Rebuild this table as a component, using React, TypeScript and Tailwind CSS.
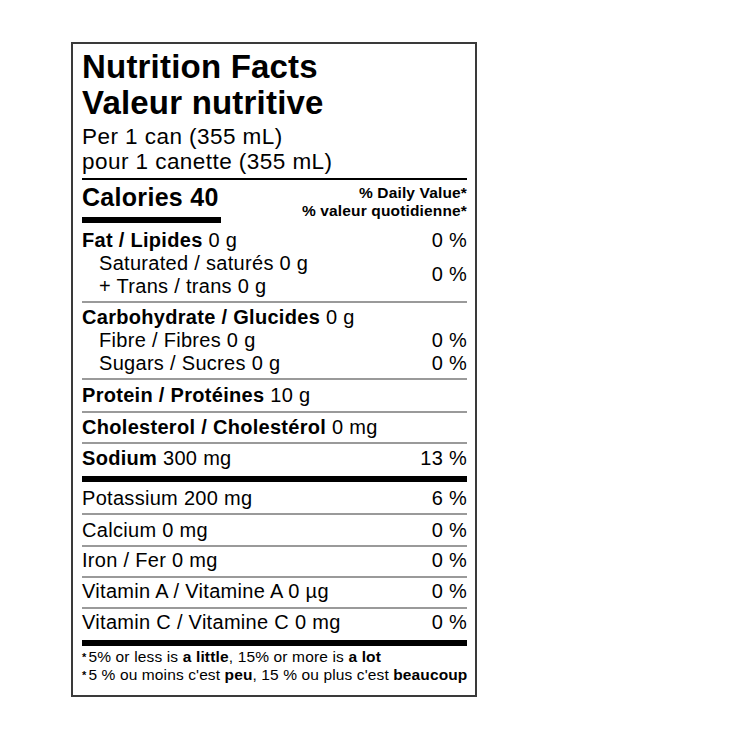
import React from "react";

const F = "font-['Liberation_Sans',Arial,Helvetica,sans-serif]";

function Line({ label, rest, dv, indent }: { label?: string; rest?: string; dv?: string; indent?: boolean }) {
  return (
    <div className={`flex justify-between leading-[23px] ${indent ? "pl-[17px]" : ""}`}>
      <span>
        {label && <b className="font-bold">{label}</b>}
        {rest && <span>{label ? " " : ""}{rest}</span>}
      </span>
      {dv && <span>{dv}</span>}
    </div>
  );
}

export default function App() {
  return (
    <div className={`w-[750px] h-[743px] bg-white text-black ${F}`}>
      <div className="pt-[42px] pl-[71px]">
        <div className="w-[406px] h-[655px] border-2 border-[#3a3a3a] pl-[9px] pr-[8px] pt-[5px]">
          {/* Header */}
          <div className="border-b-2 border-black pb-[4.5px]">
            <div className="text-[33px] font-bold leading-[36px] tracking-[0.2px]">
              <div>Nutrition Facts</div>
              <div>Valeur nutritive</div>
            </div>
            <div className="text-[22.5px] leading-[25px] tracking-[0.45px] mt-[2.5px]">
              <div>Per 1 can (355 mL)</div>
              <div>pour 1 canette (355 mL)</div>
            </div>
          </div>

          {/* Calories */}
          <div className="flex justify-between">
            <div className="pt-[2px]">
              <div className="text-[25px] font-bold leading-[30px] tracking-[0.3px]">Calories 40</div>
              <div className="mt-[5px] h-[6px] w-[139px] bg-black" />
            </div>
            <div className="pt-[4px] text-right text-[15.5px] font-bold leading-[18px] tracking-[0.15px]">
              <div>% Daily Value*</div>
              <div>% valeur quotidienne*</div>
            </div>
          </div>

          <div className="text-[20px] tracking-[0.3px]">
            {/* Fat */}
            <div className="pt-[5.8px] pb-[3.05px] border-b-2 border-[#9a9a9a]">
              <Line label="Fat / Lipides" rest="0 g" dv="0 %" />
              <div className="flex justify-between items-center">
                <div className="pl-[17px] leading-[23px]">
                  <div>Saturated / saturés 0 g</div>
                  <div>+ Trans / trans 0 g</div>
                </div>
                <span className="leading-[23px]">0 %</span>
              </div>
            </div>

            {/* Carbohydrate */}
            <div className="pt-[3.6px] pb-[2.65px] border-b-2 border-[#9a9a9a]">
              <Line label="Carbohydrate / Glucides" rest="0 g" />
              <Line indent rest="Fibre / Fibres 0 g" dv="0 %" />
              <Line indent rest="Sugars / Sucres 0 g" dv="0 %" />
            </div>

            {/* Protein */}
            <div className="pt-[3.6px] pb-[4.05px] border-b-2 border-[#9a9a9a]">
              <Line label="Protein / Protéines" rest="10 g" />
            </div>

            {/* Cholesterol */}
            <div className="pt-[3.6px] pb-[3.15px] border-b-2 border-[#9a9a9a]">
              <Line label="Cholesterol / Cholestérol" rest="0 mg" />
            </div>

            {/* Sodium */}
            <div className="pt-[2.4px] pb-[6.35px] border-b-[6px] border-black">
              <Line label="Sodium" rest="300 mg" dv="13 %" />
            </div>

            <div className="pt-[4.8px] pb-[3.15px] border-b-2 border-[#9a9a9a]">
              <Line rest="Potassium 200 mg" dv="6 %" />
            </div>
            <div className="pt-[3.8px] pb-[2.75px] border-b-2 border-[#9a9a9a]">
              <Line rest="Calcium 0 mg" dv="0 %" />
            </div>
            <div className="pt-[2.6px] pb-[3.35px] border-b-2 border-[#9a9a9a]">
              <Line rest="Iron / Fer 0 mg" dv="0 %" />
            </div>
            <div className="pt-[2.8px] pb-[3.35px] border-b-2 border-[#9a9a9a]">
              <Line rest="Vitamin A / Vitamine A 0 µg" dv="0 %" />
            </div>
            <div className="pt-[2.5px] pb-[5.95px] border-b-[6px] border-black">
              <Line rest="Vitamin C / Vitamine C 0 mg" dv="0 %" />
            </div>
          </div>

          {/* Footnote */}
          <div className="pt-[2px] text-[15.5px] leading-[18.3px] whitespace-nowrap">
            <div className="tracking-[0.15px]">
              <span className="text-[11px] font-bold align-[1px] mr-[2px]">*</span>5% or less is <b className="font-bold">a little</b>, 15% or more is <b className="font-bold">a lot</b>
            </div>
            <div className="tracking-[0.12px]">
              <span className="text-[11px] font-bold align-[1px] mr-[2px]">*</span>5 % ou moins c'est <b className="font-bold">peu</b>, 15 % ou plus c'est <b className="font-bold">beaucoup</b>
            </div>
          </div>
        </div>
      </div>
    </div>
  );
}
